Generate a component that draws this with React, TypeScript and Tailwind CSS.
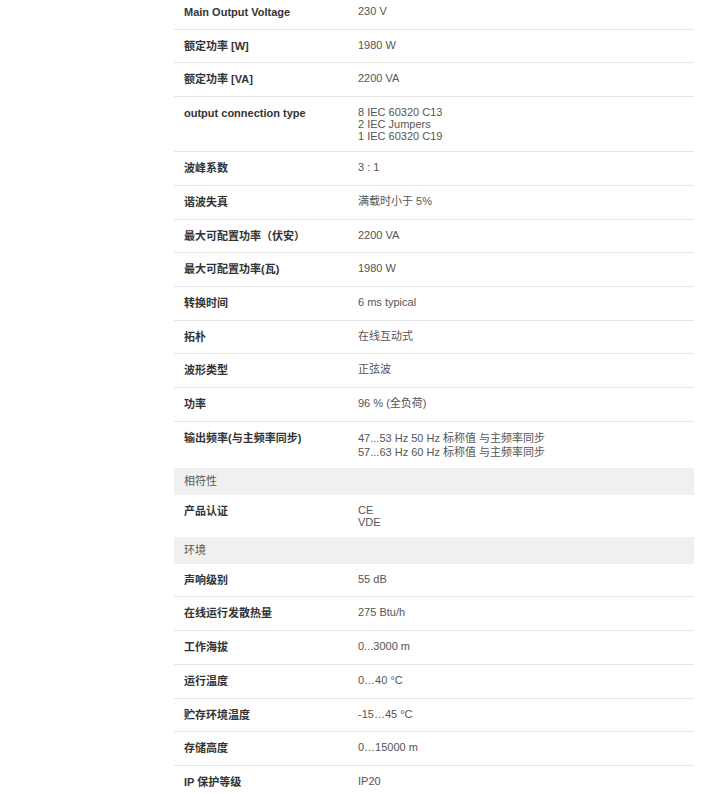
type Row =
  | { kind: 'row'; label: string; values: string[]; tall?: boolean }
  | { kind: 'section'; title: string };

const ROWS: Row[] = [
  { kind: 'row', label: 'Main Output Voltage', values: ['230 V'] },
  { kind: 'row', label: '额定功率 [W]', values: ['1980 W'] },
  { kind: 'row', label: '额定功率 [VA]', values: ['2200 VA'] },
  { kind: 'row', label: 'output connection type', values: ['8 IEC 60320 C13', '2 IEC Jumpers', '1 IEC 60320 C19'] },
  { kind: 'row', label: '波峰系数', values: ['3 : 1'] },
  { kind: 'row', label: '谐波失真', values: ['满载时小于 5%'] },
  { kind: 'row', label: '最大可配置功率（伏安）', values: ['2200 VA'] },
  { kind: 'row', label: '最大可配置功率(瓦)', values: ['1980 W'] },
  { kind: 'row', label: '转换时间', values: ['6 ms typical'] },
  { kind: 'row', label: '拓朴', values: ['在线互动式'] },
  { kind: 'row', label: '波形类型', values: ['正弦波'] },
  { kind: 'row', label: '功率', values: ['96 % (全负荷)'] },
  {
    kind: 'row',
    label: '输出频率(与主频率同步)',
    values: ['47...53 Hz 50 Hz 标称值 与主频率同步', '57...63 Hz 60 Hz 标称值 与主频率同步'],
    tall: true,
  },
  { kind: 'section', title: '相符性' },
  { kind: 'row', label: '产品认证', values: ['CE', 'VDE'] },
  { kind: 'section', title: '环境' },
  { kind: 'row', label: '声响级别', values: ['55 dB'] },
  { kind: 'row', label: '在线运行发散热量', values: ['275 Btu/h'] },
  { kind: 'row', label: '工作海拔', values: ['0...3000 m'] },
  { kind: 'row', label: '运行温度', values: ['0…40 °C'] },
  { kind: 'row', label: '贮存环境温度', values: ['-15…45 °C'] },
  { kind: 'row', label: '存储高度', values: ['0…15000 m'] },
  { kind: 'row', label: 'IP 保护等级', values: ['IP20'] },
];

export default function App() {
  return (
    <div className="min-h-screen bg-white font-['Liberation_Sans','Noto_Sans_CJK_SC',sans-serif] text-[11px]">
      <div className="ml-[174px] w-[520px] -mt-[4px]">
        {ROWS.map((r, i) => {
          if (r.kind === 'section') {
            return (
              <div key={i} className="bg-[#f0f0f0] h-[27px] flex items-center pl-[10px] text-[#555]">
                {r.title}
              </div>
            );
          }
          const next = ROWS[i + 1];
          const border = next && next.kind === 'row' ? 'border-b border-[#e6e6e6]' : '';
          return (
            <div key={i} className={`flex py-[9px] ${border}`}>
              <div className="w-[174px] shrink-0 pl-[10px] font-bold text-[#333] leading-[14.7px]">{r.label}</div>
              <div className={`pl-[10px] text-[#555] ${r.tall ? 'leading-[14px]' : 'leading-[12px]'}`}>
                {r.values.map((v, j) => (
                  <div key={j}>{v}</div>
                ))}
              </div>
            </div>
          );
        })}
      </div>
    </div>
  );
}
